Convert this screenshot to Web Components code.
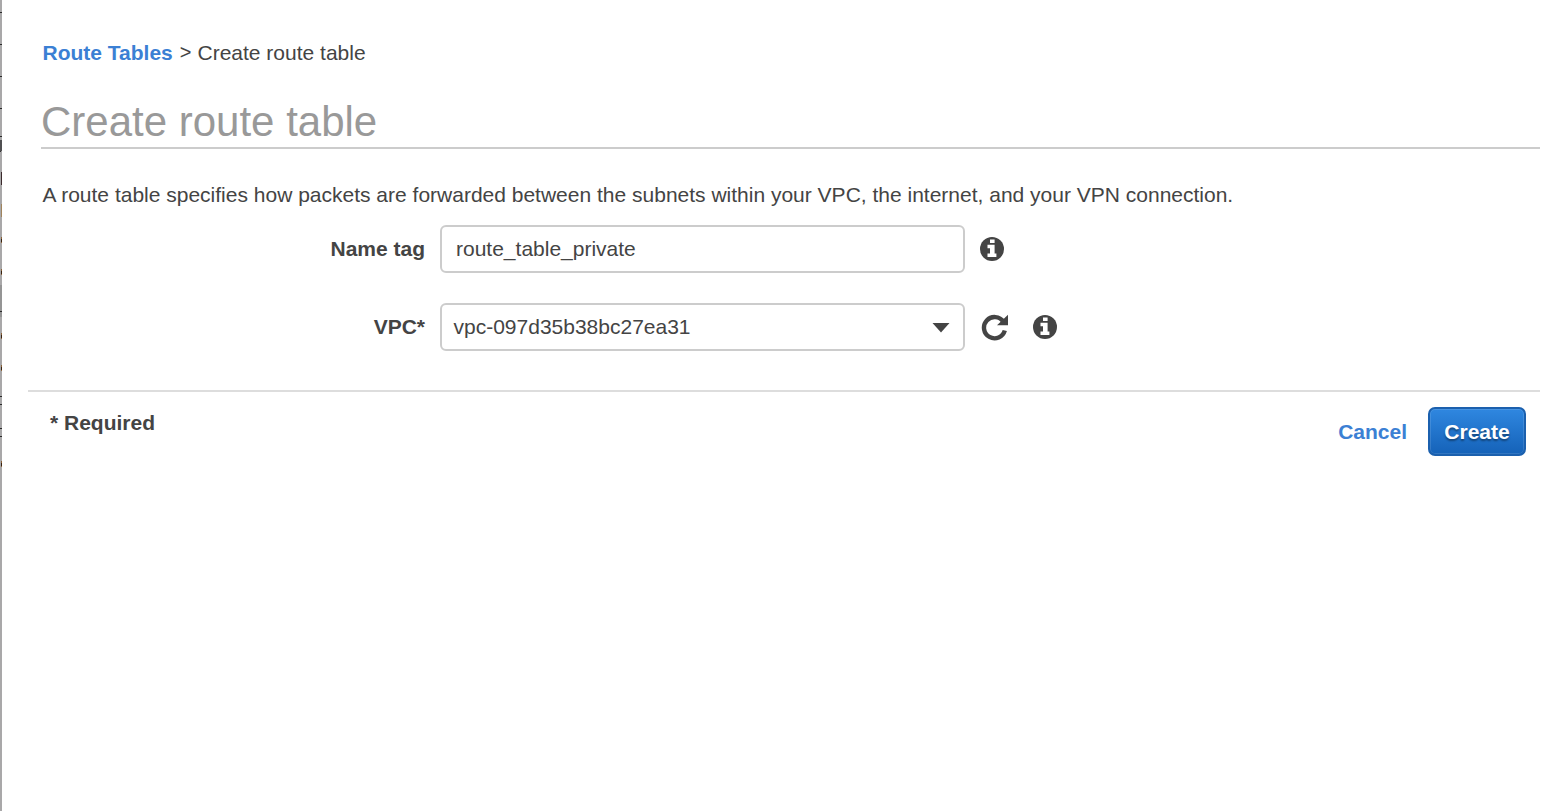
<!DOCTYPE html>
<html lang="en">
<head>
<meta charset="utf-8">
<title>Create route table</title>
<style>
html,body{margin:0;height:100%;background:#fff}
body{font-family:"Liberation Sans",Arial,sans-serif;font-size:21px;line-height:24px;color:#444;overflow:hidden}
</style>
</head>
<body>
<route-table-page></route-table-page>
<script>
function define(name, html) {
  const template = document.createElement('template');
  template.innerHTML = html;
  customElements.define(name, class extends HTMLElement {
    constructor() {
      super();
      this.attachShadow({mode: 'open'}).append(template.content.cloneNode(true));
    }
  });
}

define('page-edge', `<style>
:host{display:block;width:2px;height:811px;flex:none}
svg{display:block}
</style>
<svg width="2" height="811" shape-rendering="crispEdges">
<rect width="2" height="811" fill="#a9a8a9"/>
<rect y="285" width="2" height="32" fill="#959595"/>
<path d="M0 12h2v1H0zM0 44h2v1H0zM0 76h2v1H0zM0 108h2v1H0zM0 136h2v1H0zM0 311h2v1H0zM0 396h2v1H0zM0 404h2v1H0zM0 428h2v1H0zM0 436h2v1H0z" fill="#292929"/>
<path d="M0 140h2v11H0z" fill="#505052"/><path d="M0 151h1v1H0z" fill="#333"/>
<path d="M1 172h1v13H1z" fill="#3b2a2c"/>
<path d="M1 204h1v13H1z" fill="#a0845c"/>
<path d="M1 237h1v6H1zM1 269h1v6H1zM1 333h1v6H1zM1 365h1v6H1zM1 461h1v6H1z" fill="#8a6239"/>
<path d="M1 239h1v3H1zM1 271h1v3H1zM1 335h1v3H1zM1 367h1v3H1zM1 463h1v3H1z" fill="#372211"/>
</svg>`);

define('crumb-trail', `<style>
:host{display:flex;height:24px;white-space:nowrap}
.link{font-weight:700;color:#3b80d4}
.sep{margin:0 6px 0 7px;font-size:20px;line-height:23px}
</style><span class="link"><slot name="parent"></slot></span><span class="sep">&gt;</span><span class="now"><slot></slot></span>`);

define('page-title', `<style>
:host{display:block;border-bottom:2px solid #ccc;height:50px}
h1{margin:0;font-weight:400;font-size:42px;line-height:50px;color:#999}
</style><h1><slot></slot></h1>`);

define('form-row', `<style>
:host{display:flex;align-items:center;height:48px}
.label{width:384px;text-align:right;font-weight:700;margin-right:15px}
.label,.after{flex:none}
.after{display:flex;align-items:center}
</style><span class="label"><slot name="label"></slot></span><slot></slot><span class="after"><slot name="after"></slot></span>`);

define('text-field', `<style>
:host{display:flex;align-items:center;box-sizing:border-box;width:525px;height:48px;border:2px solid #ccc;border-radius:6px;padding:0 14px;background:#fff}
</style><slot></slot>`);

define('select-field', `<style>
:host{display:flex;align-items:center;justify-content:space-between;box-sizing:border-box;width:525px;height:48px;border:2px solid #ccc;border-radius:6px;padding:0 13px 0 11.5px;background:#fff}
svg{display:block;margin-top:2px}
</style><slot></slot><svg width="18" height="10"><path d="M.5 0h17L9 9.5z" fill="#444"/></svg>`);

define('info-icon', `<style>
:host{display:block;width:24px;height:24px}
svg{display:block}
</style><svg width="24" height="24" viewBox="0 0 24 24"><circle cx="12" cy="12" r="12" fill="#444"/><path d="M10 2.5h4.6v3.6H10zM7.5 7.8h7.1v8.8h1.8V20H7.5v-3.4H10v-5.4H7.5z" fill="#fff"/></svg>`);

define('refresh-icon', `<style>
:host{display:block;width:28px;height:28px}
svg{display:block}
</style><svg width="28" height="28" viewBox="0 0 28 28"><path d="M22.4 8.8A10.6 10.6 0 1 0 23.8 17.5" fill="none" stroke="#444" stroke-width="4.4"/><path d="M27 1.7V12.3H16z" fill="#444"/></svg>`);

define('action-link', `<style>
:host{display:block;font-weight:700;color:#3b80d4}
</style><slot></slot>`);

define('primary-button', `<style>
:host{display:block}
button{display:block;box-sizing:border-box;width:98px;height:49px;padding:0;border:2px solid #1b60ae;border-radius:7px;background:linear-gradient(#2f87e0,#1562b8);box-shadow:inset 0 0 0 1px rgba(255,255,255,.12);font:700 21px/24px "Liberation Sans",Arial,sans-serif;color:#fff;text-shadow:0 2px 2px rgba(0,0,0,.4)}
</style><button><slot></slot></button>`);

define('form-footer', `<style>
:host{display:flex;justify-content:space-between;box-sizing:border-box;border-top:2px solid #ddd;height:68px;padding:15px 14px 0 22px}
.note{font-weight:700;padding-top:4px}
.actions{display:flex;align-items:center;gap:21px;height:49px}
</style><span class="note"><slot name="note"></slot></span><div class="actions"><slot></slot></div>`);

define('route-table-page', `<style>
:host{display:flex;width:1545px;height:811px}
main{flex:1;padding:41px 5px 0 26px}
crumb-trail{margin-left:14.5px}
page-title{margin:32px 0 0 13px}
p{margin:34px 0 0 14.5px;white-space:nowrap}
form-row{margin-left:13px}
.first{margin-top:18px}
.second{margin-top:30px}
info-icon{margin-left:15px}
refresh-icon{margin-left:16px}
.second info-icon{margin-left:23.5px}
form-footer{margin-top:39px}
</style>
<page-edge></page-edge>
<main>
<crumb-trail><span slot="parent">Route Tables</span>Create route table</crumb-trail>
<page-title>Create route table</page-title>
<p>A route table specifies how packets are forwarded between the subnets within your VPC, the internet, and your VPN connection.</p>
<form-row class="first"><span slot="label">Name tag</span><text-field>route_table_private</text-field><info-icon slot="after"></info-icon></form-row>
<form-row class="second"><span slot="label">VPC*</span><select-field>vpc-097d35b38bc27ea31</select-field><refresh-icon slot="after"></refresh-icon><info-icon slot="after"></info-icon></form-row>
<form-footer><span slot="note">* Required</span><action-link>Cancel</action-link><primary-button>Create</primary-button></form-footer>
</main>`);
</script>
</body>
</html>
